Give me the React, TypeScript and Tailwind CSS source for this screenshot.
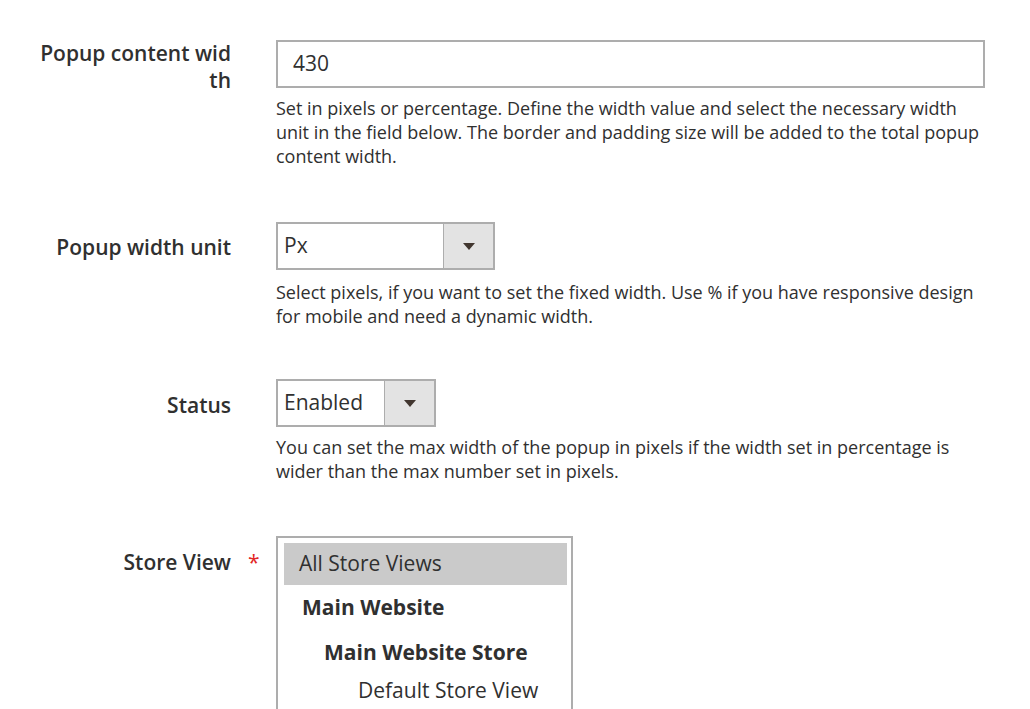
// Popup settings form (admin style)

const labelCls =
  'text-right text-[21px] leading-[27px] font-semibold text-[#303030] break-all';
const noteCls = 'mt-2 text-[18px] leading-[24px] text-[#303030]';

function SelectBox({ value, width }: { value: string; width: string }) {
  return (
    <div
      className={`flex h-[48px] ${width} border-2 border-[#adadad] bg-white`}
    >
      <div className="flex flex-1 items-center pl-[6px] text-[21px] text-[#303030]">
        {value}
      </div>
      <div className="flex w-[50px] items-center justify-center border-l border-[#adadad] bg-[#e3e3e3]">
        <svg width="12" height="7" viewBox="0 0 12 7">
          <path d="M0 0 L12 0 L6 7 Z" fill="#41362f" />
        </svg>
      </div>
    </div>
  );
}

export default function App() {
  return (
    <div className="min-h-[709px] w-full bg-white pt-[40px] font-['Open_Sans',sans-serif]">
      {/* Popup content width */}
      <div className="grid grid-cols-[231px_45px_709px]">
        <div className="flex justify-end">
          <div className={`${labelCls} w-[194px]`}>Popup content width</div>
        </div>
        <div />
        <div>
          <div className="flex h-[48px] items-center border-2 border-[#adadad] px-[15px] text-[21px] text-[#303030]">
            430
          </div>
          <p className={noteCls}>
            Set in pixels or percentage. Define the width value and select the
            necessary width unit in the field below. The border and padding size
            will be added to the total popup content width.
          </p>
        </div>
      </div>

      {/* Popup width unit */}
      <div className="mt-[54px] grid grid-cols-[231px_45px_709px]">
        <div className={`${labelCls} pt-[12px]`}>Popup width unit</div>
        <div />
        <div>
          <SelectBox value="Px" width="w-[219px]" />
          <p className={`${noteCls} mt-[10px]`}>
            Select pixels, if you want to set the fixed width. Use % if you have
            responsive design for mobile and need a dynamic width.
          </p>
        </div>
      </div>

      {/* Status */}
      <div className="mt-[51px] grid grid-cols-[231px_45px_709px]">
        <div className={`${labelCls} pt-[13px]`}>Status</div>
        <div />
        <div>
          <SelectBox value="Enabled" width="w-[160px]" />
          <p className={`${noteCls} mt-[8px]`}>
            You can set the max width of the popup in pixels if the width set in
            percentage is wider than the max number set in pixels.
          </p>
        </div>
      </div>

      {/* Store View */}
      <div className="mt-[53px] grid grid-cols-[231px_45px_709px]">
        <div className={`${labelCls} pt-[13px]`}>Store View</div>
        <div className="pt-[13px] pl-[17px] text-[21px] leading-[27px] text-[#e22626]">
          *
        </div>
        <div>
          <div className="h-[200px] w-[297px] border-2 border-[#adadad] pt-[5px] pl-[6px] pr-[4px] text-[21px] text-[#303030]">
            <div className="flex h-[42px] items-center bg-[#cacaca] pl-[15px]">
              All Store Views
            </div>
            <div className="flex h-[46px] items-center pl-[18px] font-bold">
              Main Website
            </div>
            <div className="flex h-[44px] items-center pl-[40px] font-bold">
              Main Website Store
            </div>
            <div className="flex h-[32px] items-center pl-[74px]">
              Default Store View
            </div>
          </div>
        </div>
      </div>
    </div>
  );
}
